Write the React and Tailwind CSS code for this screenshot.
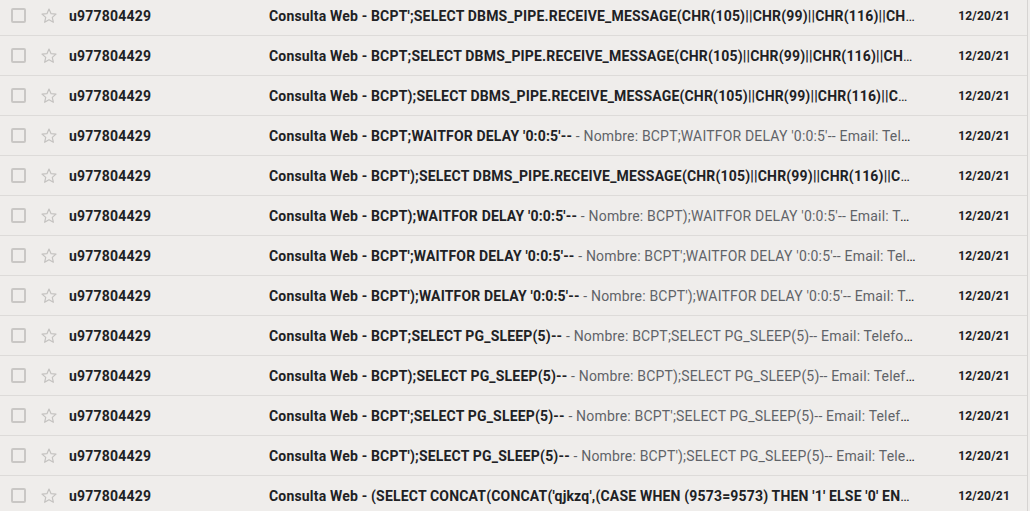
import React from "react";

const rows = [
  { subject: "Consulta Web - BCPT';SELECT DBMS_PIPE.RECEIVE_MESSAGE(CHR(105)||CHR(99)||CHR(116)||CHR(107),5) FROM DUAL--" },
  { subject: "Consulta Web - BCPT;SELECT DBMS_PIPE.RECEIVE_MESSAGE(CHR(105)||CHR(99)||CHR(116)||CHR(107),5) FROM DUAL--" },
  { subject: "Consulta Web - BCPT);SELECT DBMS_PIPE.RECEIVE_MESSAGE(CHR(105)||CHR(99)||CHR(116)||CHR(107),5) FROM DUAL--" },
  { subject: "Consulta Web - BCPT;WAITFOR DELAY '0:0:5'--", name: "BCPT;WAITFOR DELAY '0:0:5'--" },
  { subject: "Consulta Web - BCPT');SELECT DBMS_PIPE.RECEIVE_MESSAGE(CHR(105)||CHR(99)||CHR(116)||CHR(107),5) FROM DUAL--" },
  { subject: "Consulta Web - BCPT);WAITFOR DELAY '0:0:5'--", name: "BCPT);WAITFOR DELAY '0:0:5'--" },
  { subject: "Consulta Web - BCPT';WAITFOR DELAY '0:0:5'--", name: "BCPT';WAITFOR DELAY '0:0:5'--" },
  { subject: "Consulta Web - BCPT');WAITFOR DELAY '0:0:5'--", name: "BCPT');WAITFOR DELAY '0:0:5'--" },
  { subject: "Consulta Web - BCPT;SELECT PG_SLEEP(5)--", name: "BCPT;SELECT PG_SLEEP(5)--" },
  { subject: "Consulta Web - BCPT);SELECT PG_SLEEP(5)--", name: "BCPT);SELECT PG_SLEEP(5)--" },
  { subject: "Consulta Web - BCPT';SELECT PG_SLEEP(5)--", name: "BCPT';SELECT PG_SLEEP(5)--" },
  { subject: "Consulta Web - BCPT');SELECT PG_SLEEP(5)--", name: "BCPT');SELECT PG_SLEEP(5)--" },
  { subject: "Consulta Web - (SELECT CONCAT(CONCAT('qjkzq',(CASE WHEN (9573=9573) THEN '1' ELSE '0' END)),'qxkbq'))" },
];

const Star = () => (
  <svg width="18" height="18" viewBox="0 0 24 24" fill="none" stroke="#c4c2c0" strokeWidth="1.6" strokeLinejoin="round">
    <path d="M12 2.8l2.75 6.05 6.6.6-5 4.4 1.5 6.5L12 16.9l-5.85 3.45 1.5-6.5-5-4.4 6.6-.6z" />
  </svg>
);

export default function App() {
  return (
    <div
      className="w-[1030px] h-[511px] overflow-hidden bg-[#efedeb]"
      style={{ fontFamily: "Roboto, 'Liberation Sans', sans-serif" }}
    >
      <div className="-mt-1 w-[1028px] border-r border-[#d6d4d2]">
        {rows.map((row, i) => (
          <div key={i} className="flex items-center h-10 border-b border-[#dddbd9] text-sm text-[#202124]">
            <div className="w-[40px] pl-[11px] flex items-center">
              <div className="w-[15px] h-[15px] border-2 border-[#c9c7c5] rounded-[2px]" />
            </div>
            <div className="w-[29px] flex items-center">
              <Star />
            </div>
            <div className="w-[200px] font-bold tracking-[0.2px]">u977804429</div>
            <div className="w-[647px] truncate tracking-[0.18px]">
              <span className="font-bold">{row.subject}</span>
              {row.name && (
                <span className="text-[#5f6368]">
                  {" "}- Nombre: {row.name} Email: Telefono: Mensaje: {row.name}
                </span>
              )}
            </div>
            <div className="flex-1 pr-[17px] text-right text-xs font-bold tracking-[0.2px]">12/20/21</div>
          </div>
        ))}
      </div>
    </div>
  );
}
